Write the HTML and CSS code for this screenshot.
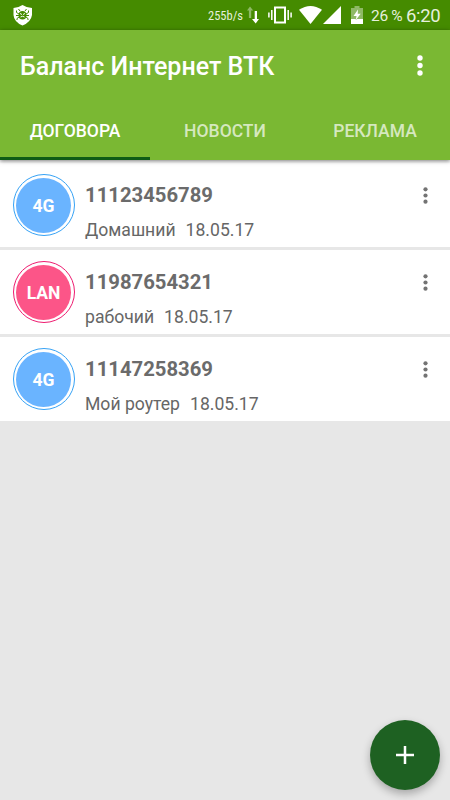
FILE: index.html
```html
<!DOCTYPE html>
<html lang="ru">
<head>
    <meta charset="UTF-8">
    <meta name="viewport" content="width=device-width, initial-scale=1.0">
    <title>Баланс Интернет ВТК</title>
    <link rel="stylesheet" href="styles.css">
</head>
<body>
    <div class="status-bar">
        <svg class="icon-shield" width="20" height="21" viewBox="0 0 20 21">
            <path fill="#fff" d="M9.500 0 Q13 2.500 19 3 V10 Q18 17 9.500 20.500 Q1 17 0.500 10 V3 Q6 2.500 9.500 0Z"/>
            <g fill="none" stroke="#458b00" stroke-width="1">
                <path d="M7 6 L5.500 4 M12 6 L13.500 4 M6 9 L3.500 7.500 V5.500 M13 9 L15.500 7.500 V5.500 M6 10.500 H3 M13 10.500 H16 M6 12 L4 13.500 V15 M13 12 L15 13.500 V15"/>
            </g>
            <ellipse cx="9.500" cy="10.300" rx="3.900" ry="4.300" fill="#458b00"/>
            <path d="M7 8.500 L9 9.500 M12 8.500 L10 9.500 M7.500 12 Q9.500 10.500 11.500 12" fill="none" stroke="#fff" stroke-width="1"/>
        </svg>
        <span class="speed">255b/s</span>
        <svg class="icon-arrows" width="12" height="18" viewBox="0 0 12 18">
            <path fill="#fff" fill-opacity="0.4" d="M3 0.500 L6.200 4.500 H4.200 V12 H1.900 V4.500 H0Z"/>
            <path fill="#fff" d="M7.700 5 V13 H5 L8.700 17.500 L12 13 H10 V5Z"/>
        </svg>
        <svg class="icon-vibrate" width="24" height="18" viewBox="0 0 24 18">
            <rect x="7" y="1.500" width="10" height="15" fill="none" stroke="#fff" stroke-width="2"/>
            <path d="M3.800 4 V14 M20.200 4 V14 M0.900 6.500 V11.500 M23.100 6.500 V11.500" stroke="#fff" stroke-width="1.500"/>
        </svg>
        <svg class="icon-wifi" width="23" height="18" viewBox="0 0 23 18">
            <path fill="#fff" d="M0 3.800 Q11.500 -3.800 23 3.800 L11.500 18Z"/>
        </svg>
        <svg class="icon-signal" width="18" height="18" viewBox="0 0 18 18">
            <path fill="#fff" d="M18 0 V18 H0Z"/>
        </svg>
        <svg class="icon-battery" width="12" height="18" viewBox="0 0 12 18">
            <path fill="#fff" fill-opacity="0.4" d="M3.500 0 H8.500 V2 H12 V13 H0 V2 H3.500Z"/>
            <path fill="#fff" d="M0 13 H12 V18 H0Z M7 3.500 L2.500 10 H5.500 L4.800 14 L9.700 7.800 H6.700Z"/>
        </svg>
        <span class="percent">26 %</span>
        <span class="clock">6:20</span>
    </div>

    <div class="header">
        <div class="toolbar">
            <h1 class="title">Баланс Интернет ВТК</h1>
            <svg class="menu-main" width="6" height="21" viewBox="0 0 6 21">
                <g fill="#fff">
                    <circle cx="3" cy="3" r="2.700"/>
                    <circle cx="3" cy="10.500" r="2.700"/>
                    <circle cx="3" cy="18" r="2.700"/>
                </g>
            </svg>
        </div>
        <ul class="tabs">
            <li class="tab active">ДОГОВОРА</li>
            <li class="tab">НОВОСТИ</li>
            <li class="tab">РЕКЛАМА</li>
        </ul>
    </div>

    <div class="list">
        <div class="row">
            <div class="badge blue"><span>4G</span></div>
            <div class="info">
                <div class="number">11123456789</div>
                <div class="details"><span>Домашний</span><span>18.05.17</span></div>
            </div>
            <svg class="menu-row" width="5" height="17" viewBox="0 0 5 17">
                <g fill="#737373">
                    <circle cx="2.500" cy="2.300" r="2.100"/>
                    <circle cx="2.500" cy="8.500" r="2.100"/>
                    <circle cx="2.500" cy="14.700" r="2.100"/>
                </g>
            </svg>
        </div>
        <div class="row">
            <div class="badge pink"><span>LAN</span></div>
            <div class="info">
                <div class="number">11987654321</div>
                <div class="details"><span>рабочий</span><span>18.05.17</span></div>
            </div>
            <svg class="menu-row" width="5" height="17" viewBox="0 0 5 17">
                <g fill="#737373">
                    <circle cx="2.500" cy="2.300" r="2.100"/>
                    <circle cx="2.500" cy="8.500" r="2.100"/>
                    <circle cx="2.500" cy="14.700" r="2.100"/>
                </g>
            </svg>
        </div>
        <div class="row">
            <div class="badge blue"><span>4G</span></div>
            <div class="info">
                <div class="number">11147258369</div>
                <div class="details"><span>Мой роутер</span><span>18.05.17</span></div>
            </div>
            <svg class="menu-row" width="5" height="17" viewBox="0 0 5 17">
                <g fill="#737373">
                    <circle cx="2.500" cy="2.300" r="2.100"/>
                    <circle cx="2.500" cy="8.500" r="2.100"/>
                    <circle cx="2.500" cy="14.700" r="2.100"/>
                </g>
            </svg>
        </div>
    </div>

    <button class="add-button" aria-label="Добавить">
        <svg width="18" height="18" viewBox="0 0 18 18">
            <path d="M9 0 V18 M0 9 H18" stroke="#fff" stroke-width="2.500"/>
        </svg>
    </button>
</body>
</html>
```
FILE: styles.css
```css
* {
    box-sizing: border-box;
}
body {
    margin: 0;
    height: 800px;
    overflow: hidden;
    background: #e7e7e7;
    font-family: Roboto, sans-serif;
}

/* Status bar */
.status-bar {
    display: flex;
    align-items: center;
    height: 30px;
    padding: 0 10px 0 13px;
    background: #458b00;
    color: #e6f0dc;
    white-space: nowrap;
}
.speed {
    width: 35px;
    margin: 1px 4px 0 auto;
    font-family: "Roboto Condensed", Roboto, sans-serif;
    font-size: 12.5px;
    font-stretch: condensed;
}
.icon-arrows {
    margin-right: 9px;
}
.icon-vibrate {
    margin-right: 7px;
}
.icon-signal {
    margin-left: 1px;
}
.icon-battery {
    margin: 0 8px 0 10px;
}
.percent {
    width: 31px;
    margin: 1px 4px 0 0;
    font-size: 15.5px;
    letter-spacing: -0.3px;
}
.clock {
    width: 34px;
    margin-top: 1px;
    font-size: 18.5px;
    letter-spacing: -0.3px;
}
.icon-arrows,
.icon-vibrate,
.icon-wifi,
.icon-signal,
.icon-battery {
    flex: none;
}

/* App bar with tabs */
.header {
    position: relative;
    height: 130px;
    background: #7ab833;
    box-shadow: 0 1px 4px rgba(0, 0, 0, 0.5);
    color: white;
}
.toolbar {
    display: flex;
    justify-content: space-between;
    align-items: center;
    height: 70px;
    padding: 0 27px 0 20px;
}
.title {
    margin: 2px 0 0;
    font-size: 25px;
    font-weight: 500;
}
.tabs {
    display: flex;
    height: 60px;
    margin: 0;
    padding: 0;
    list-style: none;
}
.tab {
    flex: 1;
    border-bottom: 3px solid transparent;
    color: rgba(255, 255, 255, 0.7);
    font-size: 17.5px;
    font-weight: 500;
    line-height: 63px;
    text-align: center;
}
.tab.active {
    border-color: #0f5c16;
    color: white;
}

/* Contracts */
.list {
    display: flex;
    flex-direction: column;
    gap: 2.5px;
    padding-top: 2.5px;
    background: linear-gradient(#fafafa 3px, #e7e7e7 3px);
}
.row {
    display: flex;
    height: 84.5px;
    padding: 11.5px 22.5px 0 12.5px;
    background: white;
}
.badge {
    width: 62px;
    height: 62px;
    padding: 2.5px;
    border: 1px solid #36a2f5;
    border-radius: 50%;
}
.badge span {
    display: block;
    height: 55px;
    border-radius: 50%;
    color: white;
    font-size: 17.5px;
    font-weight: bold;
    line-height: 57px;
    text-align: center;
}
.blue span {
    background: #6ab4ff;
}
.badge.pink {
    border-color: #ee1c70;
}
.pink span {
    background: #fc5588;
}
.info {
    flex: 1;
    margin-left: 10.5px;
}
.number {
    margin-top: 9px;
    color: #6b6b6b;
    font-size: 20.3px;
    font-weight: bold;
    line-height: 24px;
}
.details {
    display: flex;
    gap: 10px;
    margin-top: 12px;
    color: #666;
    font-size: 17.6px;
    line-height: 22px;
}
.menu-row {
    margin-top: 12.5px;
}

.add-button {
    position: fixed;
    right: 10px;
    bottom: 10px;
    display: flex;
    justify-content: center;
    align-items: center;
    width: 70px;
    height: 70px;
    border: none;
    border-radius: 50%;
    background: #1e6122;
    box-shadow: 0 4px 8px rgba(0, 0, 0, 0.28);
}
```
